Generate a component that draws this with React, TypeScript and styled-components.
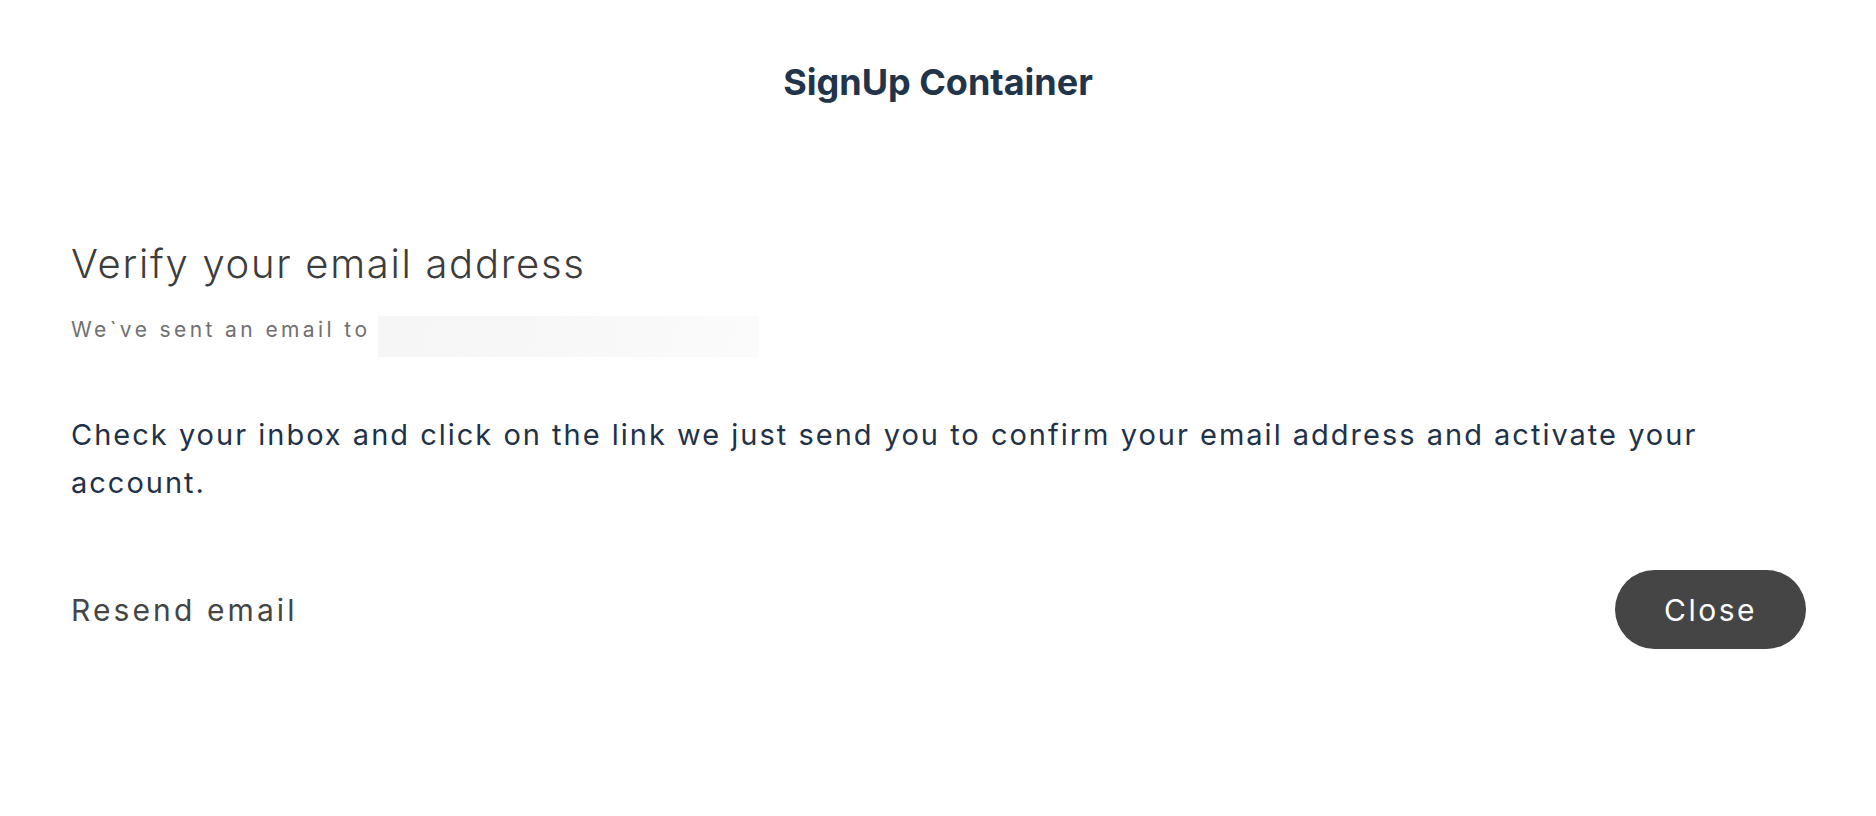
import React from 'react';
import styled, { createGlobalStyle } from 'styled-components';

const GlobalStyle = createGlobalStyle`
  html, body {
    margin: 0;
    padding: 0;
    background: #ffffff;
  }
  body {
    font-family: Inter, "Noto Sans", "Liberation Sans", sans-serif;
  }
`;

function App() {
  return (
    <>
      <GlobalStyle />
      <Page>
        <Title>SignUp Container</Title>
        <Content>
          <Heading>Verify your email address</Heading>
          <SentRow>
            <SentText>We`ve sent an email to</SentText>
            <HiddenEmail aria-hidden />
          </SentRow>
          <Message>
            Check your inbox and click on the link we just send you to confirm your email address and
            activate your account.
          </Message>
          <Footer>
            <ResendButton type="button">Resend email</ResendButton>
            <CloseButton type="button">Close</CloseButton>
          </Footer>
        </Content>
      </Page>
    </>
  );
}

const Page = styled.main`
  display: flex;
  flex-direction: column;
  width: 1876px;
  min-height: 816px;
  padding-top: 60px;
  box-sizing: border-box;
`;

const Title = styled.h1`
  margin: 0;
  text-align: center;
  font-size: 36px;
  line-height: 44px;
  font-weight: 700;
  color: #22344a;
`;

const Content = styled.section`
  display: flex;
  flex-direction: column;
  padding: 136px 70px 0 71px;
`;

const Heading = styled.h2`
  margin: 0;
  font-size: 40px;
  line-height: 48px;
  font-weight: 300;
  letter-spacing: 1.7px;
  color: #3d3d3d;
`;

const SentRow = styled.div`
  display: flex;
  align-items: flex-start;
  gap: 8px;
  margin-top: 28px;
`;

const SentText = styled.span`
  margin-top: 2px;
  font-size: 21px;
  line-height: 24px;
  letter-spacing: 3.4px;
  color: #707070;
`;

const HiddenEmail = styled.span`
  display: block;
  width: 381px;
  height: 41px;
  background: linear-gradient(100deg, #f6f6f6 0%, #f8f8f8 55%, #fbfbfb 100%);
`;

const Message = styled.p`
  margin: 54px 0 0;
  font-size: 29px;
  line-height: 48px;
  letter-spacing: 2px;
  color: #1f3248;
`;

const Footer = styled.div`
  display: flex;
  align-items: center;
  justify-content: space-between;
  margin-top: 63px;
`;

const ResendButton = styled.button`
  padding: 0;
  border: none;
  background: none;
  font-family: inherit;
  font-size: 30px;
  line-height: 36px;
  letter-spacing: 3.1px;
  color: #454545;
  cursor: pointer;
`;

const CloseButton = styled.button`
  height: 79px;
  padding: 0 49px;
  border: none;
  border-radius: 40px;
  background: #454545;
  font-family: inherit;
  font-size: 30px;
  line-height: 36px;
  letter-spacing: 2.5px;
  color: #ffffff;
  cursor: pointer;
`;

export default App;
